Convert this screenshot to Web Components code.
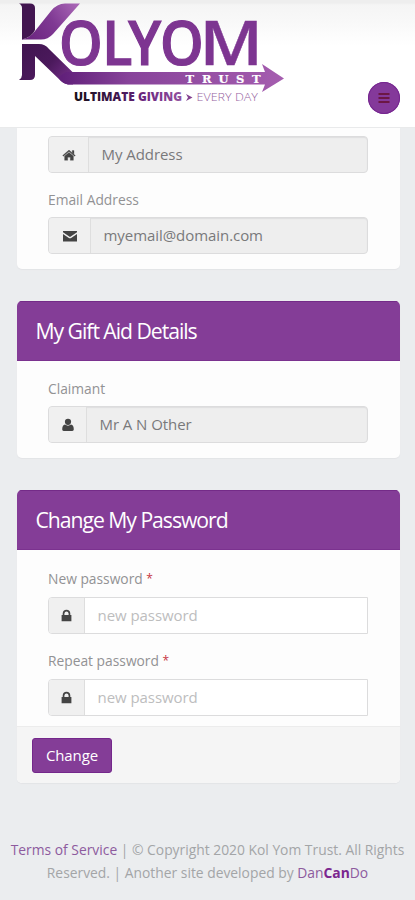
<!DOCTYPE html>
<html lang="en">
<head>
<meta charset="utf-8">
<title>Kol Yom Trust</title>
<style>
html,body{margin:0;padding:0}
body{width:415px;height:900px;overflow:hidden;background:#ebedef;font-family:"Open Sans","Noto Sans",sans-serif;color:#8d8d8f}
</style>
</head>
<body>
<kol-app></kol-app>
<script>
const define=(name,html)=>customElements.define(name,class extends HTMLElement{
  constructor(){super();this.attachShadow({mode:'open'}).innerHTML=html;}
});

define('kol-logo',`<style>:host{display:block;width:300px;height:127px}svg{display:block;overflow:visible}text{font-family:"Open Sans",sans-serif}</style>
<svg width="300" height="127" viewBox="0 0 300 127" role="img" aria-label="Kolyom Trust">
<defs>
<linearGradient id="up" gradientUnits="userSpaceOnUse" x1="28" y1="38" x2="76" y2="4"><stop offset="0" stop-color="#6c2580"/><stop offset=".5" stop-color="#7f3993"/><stop offset="1" stop-color="#a865b5"/></linearGradient>
<linearGradient id="dn" gradientUnits="userSpaceOnUse" x1="30" y1="45" x2="72" y2="80"><stop offset="0" stop-color="#421552"/><stop offset=".5" stop-color="#4b195c"/><stop offset="1" stop-color="#762f8b"/></linearGradient>
<linearGradient id="ar" gradientUnits="userSpaceOnUse" x1="62" y1="0" x2="284" y2="0"><stop offset="0" stop-color="#61207a"/><stop offset=".3" stop-color="#87439a"/><stop offset="1" stop-color="#a55daf"/></linearGradient>
<linearGradient id="tg" gradientUnits="userSpaceOnUse" x1="74" y1="0" x2="182" y2="0"><stop offset="0" stop-color="#171019"/><stop offset=".4" stop-color="#3f1750"/><stop offset=".65" stop-color="#6b2680"/><stop offset="1" stop-color="#92529f"/></linearGradient>
</defs>
<path d="M22 39Q30 38 35 31L51 11Q57 3.500 65 3.500H80L53 34Q48 39.500 41 39.500H22Z" fill="url(#up)"/>
<path d="M19 3.500H30Q35 3.500 35 8V30Q32 37 22 39.500V8Q22 5 19 3.500Z" fill="#421550"/>
<path d="M22 44H39Q45 44 49 49L73 72.500V84.500H68Q64 84 61 81L35 56V75Q35 80 30 80H19Q22 78 22 75Z" fill="url(#dn)"/>
<path d="M66 72H265L262 64L284 78.500L262 92L265 84.500H68Q62 84 58 77Z" fill="url(#ar)"/>
<g font-size="61" font-weight="600" fill="#7d3591" stroke="#7d3591" stroke-width="1.200">
<text transform="translate(59 65) scale(.91 1)" x="0 47.500 76 111" y="0">OLYO</text>
<text transform="translate(199.500 65) scale(1.13 1)" x="0" y="0" stroke-width=".4">M</text></g>
<text y="82.500" x="185.500 202 218.500 236 252" font-size="11.500" style="font-family:'DejaVu Serif','Noto Sans',serif" font-weight="700" fill="#fff" stroke="#fff" stroke-width=".2">TRUST</text>
<text x="74" y="101" font-size="11.500" font-weight="800" fill="url(#tg)" textLength="108" lengthAdjust="spacingAndGlyphs">ULTIMATE GIVING</text>
<path d="M186 94L192.500 97.500L186 101L188 97.500Z" fill="#83418f"/>
<text x="196.500" y="101" font-size="11.500" font-weight="300" fill="#96639f" textLength="61.500" lengthAdjust="spacingAndGlyphs">EVERY DAY</text>
</svg>`);

define('menu-button',`<style>:host{display:grid;place-items:center;width:32px;height:32px;border-radius:50%;background:#84399a;box-shadow:inset 0 0 0 1px #762690}</style>
<svg width="12" height="12" viewBox="0 0 12 12"><path d="M.5 2H11.500M.5 6H11.500M.5 10H11.500" stroke="#6c1745" stroke-width="2"/></svg>`);

define('site-header',`<style>:host{box-sizing:border-box;display:flex;justify-content:space-between;height:128px;background:linear-gradient(#eee 3px,#f5f5f5 5px,#f8f8f8 20px,#fff 46px);border-bottom:1px solid #e9eaeb}
.menu{padding:82px 15px 0 0}</style><slot></slot><div class="menu"><slot name="menu"></slot></div>`);

define('panel-card',`<style>:host{display:flex;flex-direction:column;box-sizing:border-box;margin:0 15.5px 32px 16.5px;background:#fdfdfd;border-radius:5px;overflow:hidden;box-shadow:0 1px 1px #e3e4e6}
::slotted([slot=title]){display:block;box-sizing:border-box;height:60px;background:#843d97;border-top:1px solid #742b88;border-bottom:1px solid #7b328f;color:#fff;font-size:21.2px;line-height:58px;letter-spacing:-1.03px;padding-left:19px}
.body{display:flex;flex-direction:column;padding:0 31.5px}
::slotted([slot=footer]){display:flex;box-sizing:border-box;height:57px;background:#f5f5f5;border-top:1px solid #ececec;padding:11px 15.5px}</style>
<slot name="title"></slot><div class="body"><slot></slot></div><slot name="footer"></slot>`);

define('field-label',`<style>:host{display:block;height:20px;font-size:13.800px;line-height:20px;white-space:nowrap;color:#929294}</style><slot></slot>`);

define('field-box',`<style>:host{display:flex;box-sizing:border-box;height:37px;border:1px solid #dcdcdd;border-radius:4px;background:#eee;overflow:hidden;font-size:15px;line-height:35px;color:#79797b;box-shadow:inset 0 1px 1px #dededf}
:host([empty]){background:#fff;color:#bdbdbe;border-radius:4px 0 0 4px;box-shadow:none}
.icon{box-sizing:border-box;width:var(--addon,36px);display:grid;place-items:center;border-right:1px solid #dedede;background:#f0f0f0;color:#444}
.text{padding-left:12.5px;letter-spacing:-.06px}</style>
<div class="icon"><slot name="icon"></slot></div><div class="text"><slot></slot></div>`);

const icons={
home:'<path d="M.7 7.400L7 2.100L13.300 7.400L12.600 8.200L7 3.600L1.400 8.200Z M10.200 2.500H12V6L10.200 4.500Z M2.600 8.100L7 4.500L11.400 8.100V12.300H8.300V9.200H5.700V12.300H2.600Z" stroke="currentColor" stroke-width=".3"/>',
mail:'<path d="M0 2H14V3.300L7 8.100L0 3.300Z M0 4.900L5.500 8.700Q7 9.700 8.500 8.700L14 4.900V12.500H0Z"/>',
user:'<circle cx="7" cy="3.800" r="3.100"/><path d="M4 6.500Q7 8.800 10 6.500Q12.800 7.100 12.800 11.500Q12.500 13 11 13H3Q1.400 13 1.200 11.500Q1.200 7.100 4 6.500Z"/>',
lock:'<path d="M2.700 6V4.500Q2.900.8 6.500.8Q10.100.8 10.300 4.500V6H11.400V12.300H1.600V6ZM4.400 6H8.600V4.500Q8.400 2.500 6.500 2.500Q4.600 2.500 4.400 4.500Z"/>'};
customElements.define('form-icon',class extends HTMLElement{
  constructor(){super();this.attachShadow({mode:'open'});}
  connectedCallback(){this.shadowRoot.innerHTML='<style>:host{display:block;width:14px;height:14px}svg{display:block;fill:currentColor}</style><svg width="14" height="14" viewBox="0 0 14 14" fill-rule="evenodd">'+icons[this.getAttribute('name')]+'</svg>';}
});

define('action-button',`<style>:host{display:block;box-sizing:border-box;width:80px;height:35px;border:1px solid #74278b;border-radius:3px;background:#843d97;color:#fff;font-size:15px;line-height:33px;text-align:center;letter-spacing:-.1px}</style><slot></slot>`);

define('site-footer',`<style>:host{display:block;padding-top:23px;text-align:center;font-size:13.850px;line-height:23px;color:#a3a5a7;white-space:nowrap}::slotted(span){display:block}</style><slot></slot>`);

define('kol-app',`<style>:host{display:flex;flex-direction:column;height:900px}
.first{border-radius:0 0 5px 5px;height:141px;padding-top:8px}
.aid{height:157px}.pass{height:293px}
.home{--addon:40px}.mail{--addon:42px}.user{--addon:38px}
.email{margin:17px 0 7px}.label{margin:18px 0 7px}
a{color:#8d5b9e}a b{color:#7b268f}i{font-style:normal;font-size:12px;line-height:1;vertical-align:1px;color:#c73543}</style>
<site-header><kol-logo></kol-logo><menu-button slot="menu"></menu-button></site-header>
<panel-card class="first">
<field-box class="home"><form-icon slot="icon" name="home"></form-icon>My Address</field-box>
<field-label class="email">Email Address</field-label>
<field-box class="mail"><form-icon slot="icon" name="mail"></form-icon>myemail@domain.com</field-box>
</panel-card>
<panel-card class="aid"><span slot="title">My Gift Aid Details</span>
<field-label class="label">Claimant</field-label>
<field-box class="user"><form-icon slot="icon" name="user"></form-icon>Mr A N Other</field-box>
</panel-card>
<panel-card class="pass"><span slot="title">Change My Password</span>
<field-label style="margin:19px 0 8px">New password <i>*</i></field-label>
<field-box empty><form-icon slot="icon" name="lock"></form-icon>new password</field-box>
<field-label style="margin:17px 0 8px">Repeat password <i>*</i></field-label>
<field-box empty style="margin-bottom:10px"><form-icon slot="icon" name="lock"></form-icon>new password</field-box>
<div slot="footer"><action-button>Change</action-button></div>
</panel-card>
<site-footer><span><a>Terms of Service</a> | © Copyright 2020 Kol Yom Trust. All Rights</span><span>Reserved. | Another site developed by <a>Dan<b>Can</b>Do</a></span></site-footer>`);
</script>
</body>
</html>
